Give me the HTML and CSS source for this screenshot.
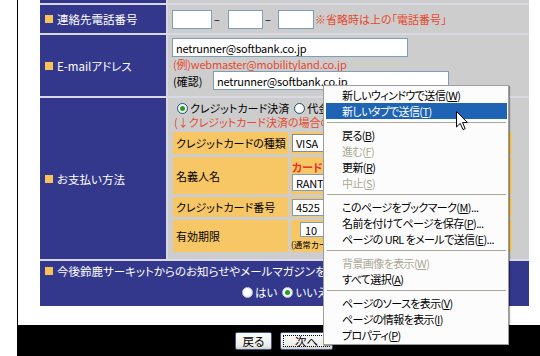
FILE: index.html
```html
<!DOCTYPE html>
<html lang="ja">
<head>
<meta charset="utf-8">
<link rel="stylesheet" href="styles.css">
</head>
<body>
<div class="screen">
  <div class="gutter"></div>
  <div class="main">
    <div class="content">
      <div class="form">
        <div class="lab"></div><div class="val"></div>

        <div class="lab"><i class="sq"></i>連絡先電話番号</div>
        <div class="val tel">
          <span class="tb w40"></span><span class="dash">–</span><span class="tb w35"></span><span class="dash d2">–</span><span class="tb w36"></span><span class="red">※省略時は上の「電話番号」</span>
        </div>

        <div class="lab"><i class="sq"></i>E-mailアドレス</div>
        <div class="val mail">
          <span class="tb email">netrunner@softbank.co.jp</span>
          <span class="red line">(例)webmaster@mobilityland.co.jp</span>
          <div class="confirm"><span class="cf">(確認)</span><span class="tb email">netrunner@softbank.co.jp</span></div>
        </div>

        <div class="lab"><i class="sq"></i>お支払い方法</div>
        <div class="val pay">
          <div class="radioline"><i class="radio on"></i><span class="rt">クレジットカード決済</span><i class="radio r2"></i><span class="rt">代金引換</span></div>
          <div class="red line">(↓クレジットカード決済の場合のみ入力してください)</div>
          <div class="cc">
            <div class="cl">クレジットカードの種類</div>
            <div class="cv"><span class="tb sel">VISA</span></div>
            <div class="cl">名義人名</div>
            <div class="cv top"><span class="redb">カード(ローマ字)に記載の名義</span><span class="tb name">RANT. NETRUNNER</span></div>
            <div class="cl">クレジットカード番号</div>
            <div class="cv"><span class="tb num">4525</span></div>
            <div class="cl">有効期限</div>
            <div class="cv top exp"><span class="tb mon">10</span><span class="small">(通常カード表面に記載)</span></div>
          </div>
        </div>

        <div class="wide">
          <div class="q"><i class="sq"></i>今後鈴鹿サーキットからのお知らせやメールマガジンを希望しますか？</div>
          <div class="yn"><i class="radio"></i><span class="rt">はい</span><i class="radio on r2"></i><span class="rt">いいえ</span></div>
        </div>
      </div>
    </div>
    <div class="footer">
      <span class="btn back">戻る</span>
      <span class="btn next"><span class="focus">次へ</span></span>
    </div>
  </div>

  <div class="menu">
    <div class="mi">新しいウィンドウで送信(<u>W</u>)</div>
    <div class="mi hl">新しいタブで送信(<u>T</u>)</div>
    <div class="sep"></div>
    <div class="mi">戻る(<u>B</u>)</div>
    <div class="mi dis">進む(<u>F</u>)</div>
    <div class="mi">更新(<u>R</u>)</div>
    <div class="mi dis">中止(<u>S</u>)</div>
    <div class="sep"></div>
    <div class="mi">このページをブックマーク(<u>M</u>)...</div>
    <div class="mi">名前を付けてページを保存(<u>P</u>)...</div>
    <div class="mi">ページの URL をメールで送信(<u>E</u>)...</div>
    <div class="sep"></div>
    <div class="mi dis">背景画像を表示(<u>W</u>)</div>
    <div class="mi">すべて選択(<u>A</u>)</div>
    <div class="sep"></div>
    <div class="mi">ページのソースを表示(<u>V</u>)</div>
    <div class="mi">ページの情報を表示(<u>I</u>)</div>
    <div class="mi">プロパティ(<u>P</u>)</div>
  </div>

  <svg class="cursor" width="13" height="20" viewBox="0 0 13 20">
    <path d="M0.5 0.5 L0.5 16 L4.2 12.4 L7 18.6 L9.2 17.6 L6.5 11.6 L11.5 11.6 Z" fill="#fff" stroke="#000" stroke-width="1" stroke-linejoin="miter"/>
  </svg>
</div>
</body>
</html>
```

FILE: styles.css
```css
html, body {
  margin: 0;
  padding: 0;
  background: #fff;
}
body {
  width: 540px;
  height: 356px;
  overflow: hidden;
  font-family: "Noto Sans CJK JP", "Noto Sans", sans-serif;
  font-size: 11px;
  font-feature-settings: "palt";
  color: #000;
}
.screen {
  position: relative;
  display: flex;
  width: 540px;
  height: 356px;
}
.gutter {
  flex: none;
  width: 17px;
  border-right: 1px solid #000;
}
.main {
  flex: 1;
  display: flex;
  flex-direction: column;
}
.content {
  height: 325px;
  overflow: hidden;
  padding-left: 22px;
}
.form {
  display: grid;
  grid-template-columns: 126px 361px;
  grid-template-rows: 23px 28px 61px 161px 45px;
  gap: 2px;
  width: 489px;
  margin-top: -20px;
  background: #d9d9e4;
}
.lab {
  background: #34388c;
  color: #fff;
  display: flex;
  align-items: center;
  padding-left: 5px;
  white-space: nowrap;
  font-size: 11.5px;
}
.sq {
  display: inline-block;
  flex: none;
  width: 8px;
  height: 8px;
  background: #f8c45a;
  margin-right: 4px;
}
.val {
  background: #cdcdcd;
  overflow: hidden;
  white-space: nowrap;
}
.red { color: #e8482c; }
.line {
  display: block;
  height: 14px;
  line-height: 14px;
}
.tb {
  box-sizing: border-box;
  display: inline-flex;
  align-items: center;
  flex: none;
  height: 19px;
  border: 1px solid #7f9db9;
  background: #fff;
  padding-left: 3px;
  color: #000;
  white-space: nowrap;
  overflow: hidden;
  letter-spacing: -0.2px;
}
.tel {
  display: flex;
  align-items: center;
  padding-left: 4px;
}
.w40 { width: 40px; }
.w35 { width: 35px; }
.w36 { width: 36px; }
.dash {
  width: 16px;
  padding-left: 2px;
  box-sizing: border-box;
}
.dash.d2 { width: 15px; }
.tel .red { margin-left: 1px; }

.mail {
  display: flex;
  flex-direction: column;
  align-items: flex-start;
  padding: 3px 0 0 4px;
}
.email { width: 236px; }
.mail .red.line { letter-spacing: -0.2px; padding-left: 1px; }
.confirm {
  display: flex;
  align-items: center;
}
.cf {
  width: 41px;
  padding-left: 1px;
  box-sizing: border-box;
}

.pay {
  display: flex;
  flex-direction: column;
  padding: 3px 0 0 5px;
}
.radioline {
  display: flex;
  align-items: center;
  height: 14px;
  padding-left: 4px;
}
.radio {
  box-sizing: border-box;
  display: inline-block;
  flex: none;
  width: 11px;
  height: 11px;
  border-radius: 50%;
  border: 1px solid #1c5180;
  background: radial-gradient(circle at 40% 40%, #fff 40%, #dcdcd4 100%);
  position: relative;
}
.radio.on::after {
  content: "";
  position: absolute;
  left: 2px;
  top: 2px;
  width: 5px;
  height: 5px;
  border-radius: 50%;
  background: #21a121;
}
.rt { margin-left: 2px; }
.radio.r2 { margin-left: 5px; }
.pay .red.line { padding-left: 1px; }

.cc {
  margin-top: 3px;
  display: grid;
  grid-template-columns: 115px 221px;
  grid-template-rows: 22px 37px 20px 32px;
  gap: 3px;
  width: 339px;
  background: #cdcdcd;
}
.cl {
  background: #f7c766;
  display: flex;
  align-items: center;
  padding-left: 3px;
  white-space: nowrap;
  overflow: hidden;
}
.cv {
  background: #f7c766;
  display: flex;
  flex-direction: column;
  justify-content: center;
  align-items: flex-start;
  padding-left: 1px;
  overflow: hidden;
}
.cv.top { justify-content: flex-start; padding-top: 3px; }
.cv.exp { padding-top: 2px; }
.sel { width: 80px; height: 18px; border-color: #8a8a8a; }
.redb {
  color: #e8302c;
  font-weight: bold;
  height: 14px;
  line-height: 14px;
  white-space: nowrap;
}
.name { width: 150px; height: 17px; }
.num { width: 60px; height: 17px; }
.mon { width: 30px; height: 15px; margin-left: 8px; padding-left: 4px; }
.small {
  font-size: 8.5px;
  line-height: 12px;
  margin-top: 1px;
  margin-left: -1px;
  white-space: nowrap;
}

.wide {
  grid-column: 1 / -1;
  background: #34388c;
  color: #fff;
  padding: 3px 0 0 5px;
  overflow: hidden;
  white-space: nowrap;
  font-size: 11.5px;
}
.q {
  display: flex;
  align-items: center;
  height: 14px;
}
.yn {
  display: flex;
  align-items: center;
  height: 14px;
  margin-top: 7px;
  padding-left: 197px;
}
.yn .radio { border-color: #c8c8d8; }

.footer {
  height: 31px;
  background: #000;
  display: flex;
  align-items: flex-start;
  gap: 8px;
  padding: 7px 0 0 217px;
  box-sizing: border-box;
}
.btn {
  box-sizing: border-box;
  height: 18px;
  display: flex;
  align-items: center;
  justify-content: center;
  border: 1px solid #3a5a8a;
  border-radius: 2px;
  background: linear-gradient(#ffffff, #ecebe6 80%, #d6d0c5);
  color: #000;
  font-size: 11.5px;
}
.back { width: 37px; }
.next { width: 53px; padding: 2px; }
.focus {
  flex: 1;
  align-self: stretch;
  display: flex;
  align-items: center;
  justify-content: center;
  border: 1px dotted #000;
}

.menu {
  position: absolute;
  left: 323px;
  top: 85px;
  width: 186px;
  height: 260px;
  box-sizing: border-box;
  border: 1px solid #9d9d9d;
  box-shadow: 1px 1px 1px rgba(0, 0, 0, 0.35);
  background: #fcfcfc;
  padding: 1px 1px 1px 2px;
  overflow: hidden;
}
.mi {
  height: 16px;
  line-height: 16px;
  padding-left: 16px;
  white-space: nowrap;
  color: #000;
  font-size: 11px;
  letter-spacing: -0.6px;
}
.mi u { text-decoration-thickness: 1px; text-underline-offset: 1px; }
.mi.hl { background: #1e63b4; color: #fff; }
.mi.dis { color: #aca899; }
.sep {
  height: 8px;
  position: relative;
}
.sep::after {
  content: "";
  position: absolute;
  left: 1px;
  right: 1px;
  top: 3px;
  height: 1px;
  background: #aca899;
}
.cursor {
  position: absolute;
  left: 456px;
  top: 111px;
}
```
